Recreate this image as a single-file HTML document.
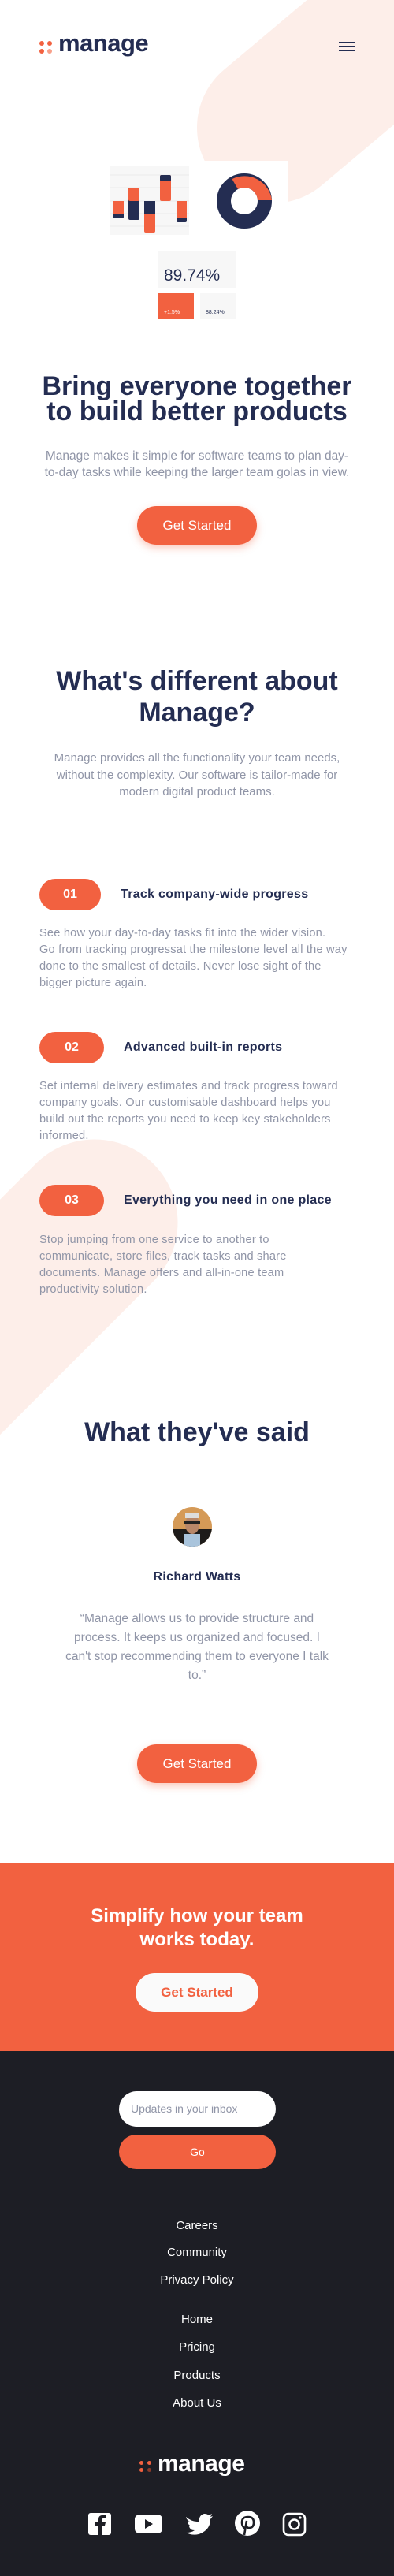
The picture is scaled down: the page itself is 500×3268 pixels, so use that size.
<!DOCTYPE html>
<html><head><meta charset="utf-8"><style>
*{margin:0;padding:0;box-sizing:border-box}
body{width:500px;height:3268px;position:relative;background:#fff;font-family:"Liberation Sans",Arial,sans-serif;overflow:hidden}
.a{position:absolute}
.c{position:absolute;left:0;width:500px;text-align:center}
h1,h2{color:#242d52;font-weight:bold}
.p{color:#9095a7}
.btn{position:absolute;left:174px;width:152px;height:49px;border-radius:25px;background:#f26140;color:#fff;font-size:17px;text-align:center;line-height:49px;box-shadow:0 4px 10px rgba(242,97,64,.35)}
.pill{position:absolute;left:50px;height:40px;border-radius:20px;background:#f26140;color:#fff;font-weight:bold;font-size:16px;text-align:center;line-height:40px}
.it{position:absolute;font-weight:bold;color:#242d52;font-size:16px;letter-spacing:0.3px}
.bd{position:absolute;left:50px;width:420px;font-size:14.6px;line-height:21px;color:#9095a7;white-space:nowrap;letter-spacing:0.2px}
.fl{position:absolute;left:0;width:500px;text-align:center;color:#fff;font-size:15px}
</style></head><body>
<svg class="a" style="left:0;top:0" width="500" height="1900">
<line x1="346" y1="162" x2="846" y2="-258" stroke="#fdeee9" stroke-width="192" stroke-linecap="round"/>
<line x1="120" y1="1551" x2="-480" y2="2151" stroke="#fdeee9" stroke-width="211" stroke-linecap="round"/>
</svg>
<!-- header -->
<div class="a" style="left:50px;top:52px;width:6px;height:6px;border-radius:3px;background:#f26140"></div>
<div class="a" style="left:60px;top:52px;width:6px;height:6px;border-radius:3px;background:#f26140"></div>
<div class="a" style="left:50px;top:62px;width:6px;height:6px;border-radius:3px;background:#f26140"></div>
<div class="a" style="left:60px;top:62px;width:6px;height:6px;border-radius:3px;background:#f8a08a"></div>
<div class="a" style="left:74px;top:37px;font-size:31px;font-weight:bold;color:#242d52;letter-spacing:-0.5px">manage</div>
<div class="a" style="left:430px;top:53px;width:20px;height:2px;background:#242d52"></div>
<div class="a" style="left:430px;top:58px;width:20px;height:2px;background:#242d52"></div>
<div class="a" style="left:430px;top:63px;width:20px;height:2px;background:#242d52"></div>
<!-- illustration -->
<svg class="a" style="left:0;top:0" width="500" height="420">
<rect x="133" y="204" width="115" height="102" fill="#fff"/>
<rect x="140" y="211" width="100" height="87" fill="#f7f7f7"/>
<g stroke="#ebebeb" stroke-width="1"><line x1="140" y1="222" x2="240" y2="222"/><line x1="140" y1="238" x2="240" y2="238"/><line x1="140" y1="255" x2="240" y2="255"/><line x1="140" y1="271" x2="240" y2="271"/><line x1="140" y1="287" x2="240" y2="287"/></g>
<rect x="143" y="255" width="14" height="22" rx="2" fill="#242d52"/><rect x="143" y="255" width="14" height="17" fill="#f26140"/>
<rect x="163" y="238" width="14" height="41" rx="2" fill="#242d52"/><rect x="163" y="238" width="14" height="17" rx="2" fill="#f26140"/>
<rect x="183" y="255" width="14" height="40" rx="2" fill="#f26140"/><rect x="183" y="255" width="14" height="16" fill="#242d52"/>
<rect x="203" y="222" width="14" height="33" rx="2" fill="#f26140"/><rect x="203" y="222" width="14" height="8" rx="2" fill="#242d52"/>
<rect x="224" y="255" width="13" height="27" rx="2" fill="#242d52"/><rect x="224" y="255" width="13" height="21" fill="#f26140"/>
<rect x="253" y="204" width="113" height="102" fill="#fff"/>
<circle cx="310" cy="255" r="26" fill="none" stroke="#242d52" stroke-width="18"/>
<path d="M294.5 227.1 A35 35 0 0 1 345 254 L327 254 A17 17 0 0 0 302 240 Z" fill="#f26140"/>
<rect x="193" y="312" width="114" height="100" fill="#fff"/>
<rect x="201" y="319" width="98" height="46" fill="#f7f7f7"/>
<text x="208" y="356" font-family="Liberation Sans,Arial,sans-serif" font-size="21" fill="#242d52">89.74%</text>
<rect x="201" y="372" width="45" height="33" fill="#f26140"/>
<text x="208" y="398" font-family="Liberation Sans,Arial,sans-serif" font-size="7" fill="#fff">+1.5%</text>
<rect x="254" y="372" width="45" height="33" fill="#f7f7f7"/>
<text x="261" y="398" font-family="Liberation Sans,Arial,sans-serif" font-size="7" fill="#242d52">88.24%</text>
</svg>
<!-- hero -->
<h1 class="c" style="top:474px;font-size:34px;line-height:32px">Bring everyone together<br>to build better products</h1>
<p class="c p" style="top:568px;font-size:15.5px;line-height:21px">Manage makes it simple for software teams to plan day-<br>to-day tasks while keeping the larger team golas in view.</p>
<div class="btn" style="top:642px">Get Started</div>
<!-- different -->
<h2 class="c" style="top:844px;font-size:34px;line-height:40px">What's different about<br>Manage?</h2>
<p class="c p" style="top:951px;font-size:15px;line-height:21.5px">Manage provides all the functionality your team needs,<br>without the complexity. Our software is tailor-made for<br>modern digital product teams.</p>
<div class="pill" style="top:1115px;width:78px">01</div>
<div class="it" style="left:153px;top:1126px">Track company-wide progress</div>
<div class="bd" style="top:1174px">See how your day-to-day tasks fit into the wider vision.<br>Go from tracking progressat the milestone level all the way<br>done to the smallest of details. Never lose sight of the<br>bigger picture again.</div>
<div class="pill" style="top:1309px;width:82px">02</div>
<div class="it" style="left:157px;top:1320px">Advanced built-in reports</div>
<div class="bd" style="top:1368px">Set internal delivery estimates and track progress toward<br>company goals. Our customisable dashboard helps you<br>build out the reports you need to keep key stakeholders<br>informed.</div>
<div class="pill" style="top:1503px;width:82px">03</div>
<div class="it" style="left:157px;top:1514px">Everything you need in one place</div>
<div class="bd" style="top:1563px">Stop jumping from one service to another to<br>communicate, store files, track tasks and share<br>documents. Manage offers and all-in-one team<br>productivity solution.</div>
<!-- testimonials -->
<h2 class="c" style="top:1798px;font-size:34px">What they've said</h2>
<svg class="a" style="left:219px;top:1912px" width="50" height="50">
<defs><clipPath id="cc"><circle cx="25" cy="25" r="25"/></clipPath></defs>
<g clip-path="url(#cc)"><rect width="50" height="50" fill="#d59a57"/><rect x="0" y="28" width="50" height="22" fill="#1d1b1a"/><ellipse cx="25" cy="22" rx="9" ry="12" fill="#b88769"/><rect x="15" y="34" width="20" height="16" fill="#a9c4dc"/><rect x="15" y="18" width="20" height="4" fill="#222"/><rect x="16" y="8" width="18" height="6" fill="#ddd"/></g>
</svg>
<div class="c" style="top:1992px;font-size:16px;font-weight:bold;color:#242d52;letter-spacing:0.3px">Richard Watts</div>
<p class="c p" style="top:2042px;font-size:15.5px;line-height:24px">“Manage allows us to provide structure and<br>process. It keeps us organized and focused. I<br>can't stop recommending them to everyone I talk<br>to.”</p>
<div class="btn" style="top:2213px">Get Started</div>
<!-- cta -->
<div class="a" style="left:0;top:2363px;width:500px;height:239px;background:#f26140"></div>
<div class="c" style="top:2416px;font-size:24px;font-weight:bold;color:#fff;line-height:30px">Simplify how your team<br>works today.</div>
<div class="a" style="left:172px;top:2503px;width:156px;height:49px;border-radius:25px;background:#fafafa;color:#f26140;font-weight:bold;font-size:17px;text-align:center;line-height:49px">Get Started</div>
<!-- footer -->
<div class="a" style="left:0;top:2602px;width:500px;height:666px;background:#1d1e25"></div>
<div class="a" style="left:151px;top:2653px;width:199px;height:45px;border-radius:23px;background:#fff;color:#9095a7;font-size:14px;line-height:45px;padding-left:15px">Updates in your inbox</div>
<div class="a" style="left:151px;top:2708px;width:199px;height:44px;border-radius:22px;background:#f26140;color:#fff;font-size:14px;line-height:44px;text-align:center">Go</div>
<div class="fl" style="top:2815px">Careers</div>
<div class="fl" style="top:2849px">Community</div>
<div class="fl" style="top:2884px">Privacy Policy</div>
<div class="fl" style="top:2934px">Home</div>
<div class="fl" style="top:2969px">Pricing</div>
<div class="fl" style="top:3005px">Products</div>
<div class="fl" style="top:3040px">About Us</div>
<div class="a" style="left:177px;top:3122px;width:5px;height:5px;border-radius:3px;background:#f26140"></div>
<div class="a" style="left:187px;top:3122px;width:5px;height:5px;border-radius:3px;background:#f26140"></div>
<div class="a" style="left:177px;top:3131px;width:5px;height:5px;border-radius:3px;background:#f26140"></div>
<div class="a" style="left:187px;top:3131px;width:5px;height:5px;border-radius:3px;background:#8a3a2a"></div>
<div class="a" style="left:200px;top:3109px;font-size:30px;font-weight:bold;color:#fff;letter-spacing:-0.5px">manage</div>
<svg class="a" style="left:0;top:3180px" width="500" height="45">
<rect x="112" y="8" width="29" height="28" rx="3" fill="#fff"/>
<path d="M125 36 V24 H121 V20 H125 V16 Q125 11 130 11 H134 V15 H131 Q129 15 129 17 V20 H134 L133 24 H129 V36 Z" fill="#1d1e25"/>
<rect x="171" y="10" width="35" height="24" rx="6" fill="#fff"/>
<path d="M184 16 L194 22 L184 28 Z" fill="#1d1e25"/>
<path d="M236 13 Q244 20 253 19 Q252 11 259 9 Q263 9 265 11 L269 9 L267 13 L270 12 L267 16 Q267 30 252 35 Q244 37 236 33 Q243 33 247 30 Q241 30 240 25 L243 25 Q238 23 238 18 L241 19 Q236 16 236 13 Z" fill="#fff"/>
<circle cx="314" cy="21" r="16" fill="#fff"/>
<path d="M312 28 Q307 26 307 20 Q307 13 315 13 Q322 13 322 20 Q322 27 316 27 Q313 27 313 24 M313 18 L310 36" stroke="#1d1e25" stroke-width="2.6" fill="none"/>
<rect x="360" y="9" width="27" height="27" rx="6" fill="none" stroke="#fff" stroke-width="2.6"/>
<circle cx="373.5" cy="22.5" r="6" fill="none" stroke="#fff" stroke-width="2.6"/>
<circle cx="381" cy="14" r="1.6" fill="#fff"/>
</svg>
</body></html>
